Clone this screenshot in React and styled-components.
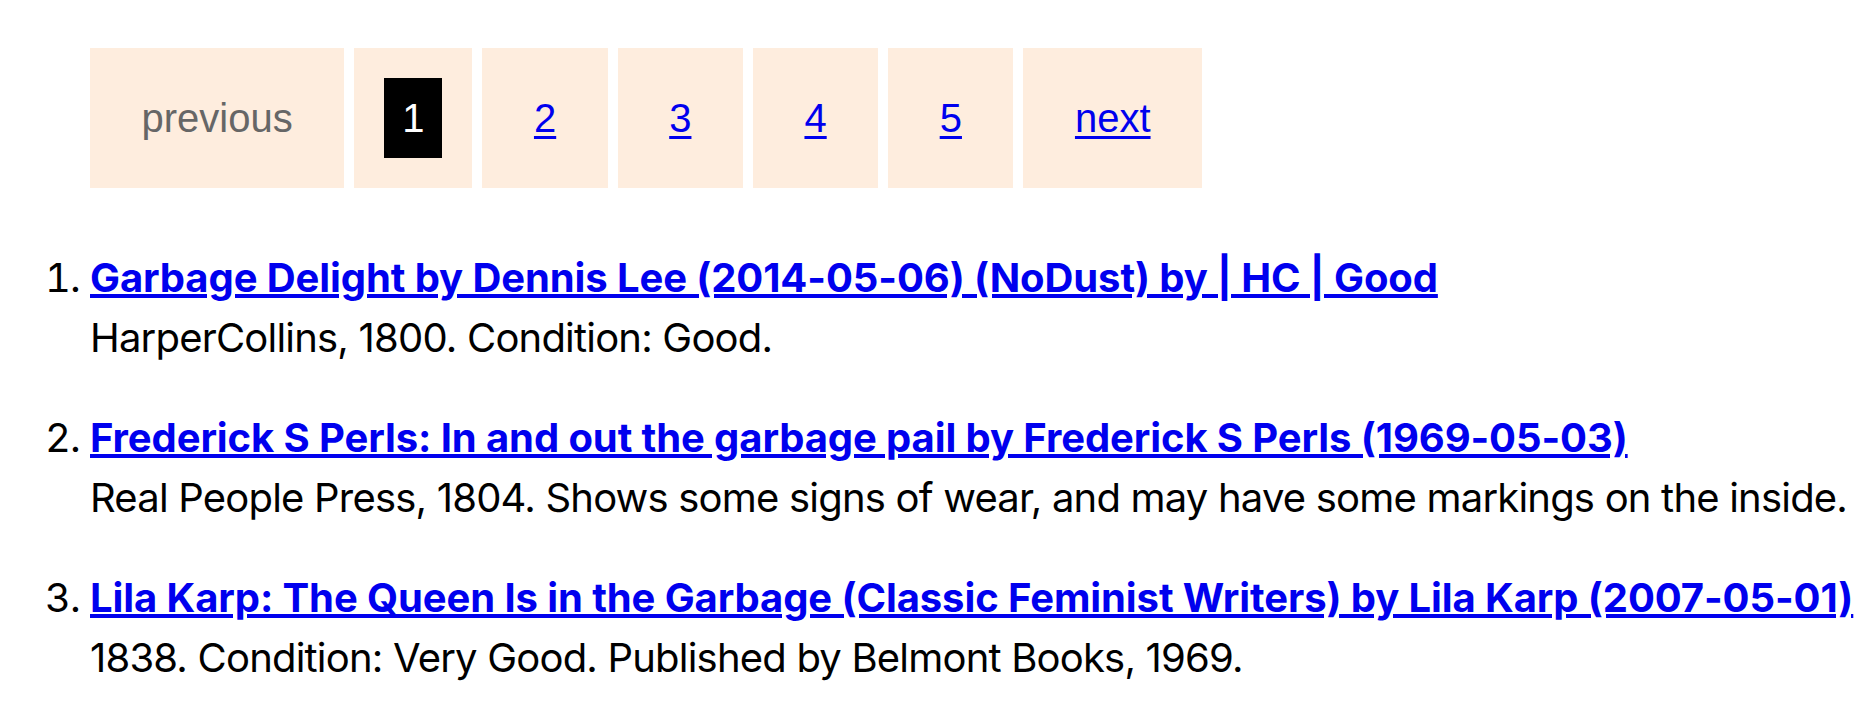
import React from "react";
import styled, { createGlobalStyle } from "styled-components";

const Global = createGlobalStyle`
  html, body { background: #ffffff; }
  body {
    margin: 8px;
    font-family: Inter, "Noto Sans", sans-serif;
    font-size: 40px;
    color: #000000;
  }
`;

const Pager = styled.ul`
  display: flex;
  align-items: stretch;
  gap: 10px;
  list-style: none;
  margin: 40px 0 0;
  padding: 0 0 0 82px;
  font-family: "Liberation Sans", Arial, sans-serif;
  font-size: 40px;
  line-height: 46px;
`;

const PageItem = styled.li`
  background: #feedde;
  padding: 30px;
  display: flex;
  align-items: center;
`;

const PageLink = styled.a`
  display: block;
  padding: 17px 21.5px;
  color: ${(p) => (p.$disabled ? "#666666" : "#0000ee")};
  text-decoration: ${(p) => (p.$disabled ? "none" : "underline")};
  text-decoration-thickness: 3px;
  text-underline-offset: 4px;
`;

const Current = styled.span`
  display: block;
  padding: 17px 18px;
  background: #000000;
  color: #ffffff;
`;

const Results = styled.ol`
  margin: 60px 0 0;
  padding: 0 0 0 82px;
  font-size: 40px;
  line-height: 60px;
  letter-spacing: -0.8px;
`;

const Result = styled.li`
  margin-bottom: 40px;
  padding-left: 0;
`;

const Title = styled.a`
  display: block;
  color: #0000ee;
  font-weight: 700;
  letter-spacing: -0.1px;
  text-decoration: underline;
  white-space: nowrap;
`;

const Blurb = styled.div`
  color: #000000;
  white-space: nowrap;
`;

const pages = [2, 3, 4, 5];

const results = [
  {
    title: "Garbage Delight by Dennis Lee (2014-05-06) (NoDust) by | HC | Good",
    blurb: "HarperCollins, 1800. Condition: Good.",
  },
  {
    title:
      "Frederick S Perls: In and out the garbage pail by Frederick S Perls (1969-05-03)",
    blurb:
      "Real People Press, 1804. Shows some signs of wear, and may have some markings on the inside.",
  },
  {
    title:
      "Lila Karp: The Queen Is in the Garbage (Classic Feminist Writers) by Lila Karp (2007-05-01)",
    blurb: "1838. Condition: Very Good. Published by Belmont Books, 1969.",
  },
];

export default function App() {
  return (
    <>
      <Global />
      <Pager>
        <PageItem>
          <PageLink $disabled>previous</PageLink>
        </PageItem>
        <PageItem>
          <Current>1</Current>
        </PageItem>
        {pages.map((n) => (
          <PageItem key={n}>
            <PageLink href="#">{n}</PageLink>
          </PageItem>
        ))}
        <PageItem>
          <PageLink href="#">next</PageLink>
        </PageItem>
      </Pager>
      <Results>
        {results.map((r) => (
          <Result key={r.title}>
            <Title href="#">{r.title}</Title>
            <Blurb>{r.blurb}</Blurb>
          </Result>
        ))}
      </Results>
    </>
  );
}
